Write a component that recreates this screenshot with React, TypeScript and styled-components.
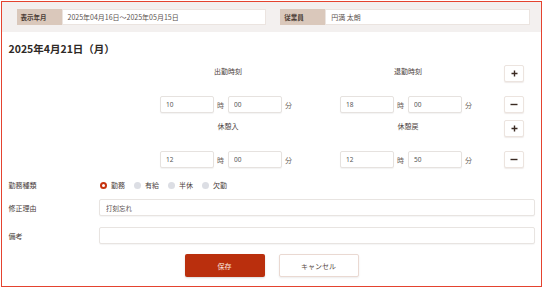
import React from 'react';
import styled, {createGlobalStyle} from "styled-components";

const GlobalStyle = createGlobalStyle`
  html, body {
    margin: 0;
    padding: 0;
    background: #ffffff;
  }
  body {
    font-family: "Noto Sans CJK JP", "Noto Sans", sans-serif;
    color: #3a3330;
  }
`

const timeBlocks = [
    {left: '出勤時刻', right: '退勤時刻', values: ['10', '00', '18', '00']},
    {left: '休憩入', right: '休憩戻', values: ['12', '00', '12', '50']},
];

const workTypes = ['勤務', '有給', '半休', '欠勤'];

const PlusIcon = () => (
    <svg width="7" height="7" viewBox="0 0 7 7">
        <path d="M3.5 0.5v6M0.5 3.5h6" stroke="#3a2a22" strokeWidth="1.4"/>
    </svg>
);

const MinusIcon = () => (
    <svg width="8" height="7" viewBox="0 0 8 7">
        <path d="M0.5 3.5h7" stroke="#3a2a22" strokeWidth="1.4"/>
    </svg>
);

const TimeGroup = ({hour, minute}: { hour: string, minute: string }) => (
    <TimeRow>
        <TimeInput defaultValue={hour}/>
        <Unit>時</Unit>
        <TimeInput defaultValue={minute}/>
        <Unit>分</Unit>
    </TimeRow>
);

export default function App() {
    return (
        <>
            <GlobalStyle/>
            <Card>
                <Header>
                    <HeaderField>
                        <HeaderLabel>表示年月</HeaderLabel>
                        <HeaderValue>2025年04月16日～2025年05月15日</HeaderValue>
                    </HeaderField>
                    <HeaderField>
                        <HeaderLabel>従業員</HeaderLabel>
                        <HeaderValue>円満 太朗</HeaderValue>
                    </HeaderField>
                </Header>
                <Body>
                    <Title>2025年4月21日（月）</Title>
                    <TimeSection>
                        {timeBlocks.map((b) => (
                            <TimeBlock key={b.left}>
                                <span/>
                                <ColLabel>{b.left}</ColLabel>
                                <span/>
                                <ColLabel>{b.right}</ColLabel>
                                <span/>
                                <IconButton><PlusIcon/></IconButton>

                                <span/>
                                <TimeGroup hour={b.values[0]} minute={b.values[1]}/>
                                <span/>
                                <TimeGroup hour={b.values[2]} minute={b.values[3]}/>
                                <span/>
                                <IconButton><MinusIcon/></IconButton>
                            </TimeBlock>
                        ))}
                    </TimeSection>
                    <FormRow $top={11}>
                        <FieldLabel>勤務種類</FieldLabel>
                        <RadioGroup>
                            {workTypes.map((t, i) => (
                                <RadioItem key={t}>
                                    <RadioDot $checked={i === 0}/>
                                    {t}
                                </RadioItem>
                            ))}
                        </RadioGroup>
                    </FormRow>
                    <FormRow $top={8}>
                        <FieldLabel>修正理由</FieldLabel>
                        <TextField defaultValue="打刻忘れ"/>
                    </FormRow>
                    <FormRow $top={11}>
                        <FieldLabel>備考</FieldLabel>
                        <TextField defaultValue=""/>
                    </FormRow>
                    <Actions>
                        <PrimaryButton>保存</PrimaryButton>
                        <SecondaryButton>キャンセル</SecondaryButton>
                    </Actions>
                </Body>
            </Card>
        </>
    );
}

const Card = styled.div`
  margin: 1px 0 0 1px;
  width: 541px;
  height: 286px;
  box-sizing: border-box;
  border: 1.5px solid #e4432f;
  background: #ffffff;
  display: flex;
  flex-direction: column;
`

const Header = styled.div`
  background: #f3f0ef;
  height: 30px;
  display: flex;
  align-items: center;
  gap: 14px;
  padding: 0 11px 0 14.5px;
  box-sizing: border-box;
`

const HeaderField = styled.div`
  flex: 1;
  display: flex;
  height: 16px;
`

const HeaderLabel = styled.div`
  width: 45px;
  flex-shrink: 0;
  background: #dac8bb;
  font-size: 6.5px;
  font-weight: 700;
  color: #4a3c35;
  display: flex;
  align-items: center;
  padding-left: 4px;
  box-sizing: border-box;
`

const HeaderValue = styled.div`
  flex: 1;
  background: #ffffff;
  border: 1px solid #ebe4e0;
  font-size: 7px;
  color: #5a5250;
  display: flex;
  align-items: center;
  padding-left: 5px;
`

const Body = styled.div`
  padding: 0 0 0 6.5px;
  display: flex;
  flex-direction: column;
`

const Title = styled.div`
  font-size: 10.5px;
  font-weight: 700;
  color: #2e2926;
  margin-top: 10px;
  line-height: 14px;
`

const TimeSection = styled.div`
  margin-top: 9px;
  display: flex;
  flex-direction: column;
  gap: 7px;
`

const TimeBlock = styled.div`
  display: grid;
  grid-template-columns: 151.5px 136px 44px 136px 28px 20px;
  grid-template-rows: 18px 17px;
  row-gap: 13px;
  align-items: start;
`

const ColLabel = styled.div`
  font-size: 7px;
  color: #4a403b;
  text-align: center;
  line-height: 10px;
  padding-top: 1px;
`

const IconButton = styled.button`
  width: 20px;
  height: 17px;
  padding: 0;
  border: 1px solid #ece4df;
  border-radius: 2px;
  background: #ffffff;
  box-shadow: 0 1px 1px rgba(120, 90, 70, 0.12);
  display: flex;
  align-items: center;
  justify-content: center;
`

const TimeRow = styled.div`
  display: flex;
  align-items: center;
`

const TimeInput = styled.input`
  width: 54px;
  height: 17px;
  box-sizing: border-box;
  border: 1px solid #e6e2df;
  border-radius: 2px;
  box-shadow: 0 1px 1px rgba(0, 0, 0, 0.05);
  font-family: "Noto Sans", sans-serif;
  font-size: 6.5px;
  color: #555;
  padding: 0 0 0 5px;
  outline: none;
`

const Unit = styled.span`
  width: 17px;
  font-size: 7px;
  color: #6a5e58;
  padding-left: 3px;
  box-sizing: border-box;
`

const FormRow = styled.div<{ $top: number }>`
  display: grid;
  grid-template-columns: 90.5px 436px;
  align-items: center;
  margin-top: ${p => p.$top}px;
`

const FieldLabel = styled.div`
  font-size: 7px;
  color: #4a403b;
  line-height: 12px;
`

const RadioGroup = styled.div`
  display: flex;
  align-items: center;
  gap: 9px;
  padding-left: 1px;
`

const RadioItem = styled.label`
  display: flex;
  align-items: center;
  gap: 4px;
  font-size: 7px;
  color: #4a403b;
  line-height: 12px;
`

const RadioDot = styled.span<{ $checked: boolean }>`
  width: 7px;
  height: 7px;
  border-radius: 50%;
  box-sizing: border-box;
  background: ${p => p.$checked ? '#ffffff' : '#dcdee4'};
  border: ${p => p.$checked ? '2px solid #c6330f' : 'none'};
`

const TextField = styled.input`
  height: 17px;
  box-sizing: border-box;
  border: 1px solid #e8e4e1;
  border-radius: 2px;
  box-shadow: 0 1px 1px rgba(0, 0, 0, 0.04);
  font-family: "Noto Sans CJK JP", sans-serif;
  font-size: 6.5px;
  color: #5a5250;
  padding: 0 0 0 6px;
  outline: none;
`

const Actions = styled.div`
  display: flex;
  justify-content: center;
  gap: 14px;
  margin: 10px 0 0 -6.5px;
`

const PrimaryButton = styled.button`
  width: 80px;
  height: 23px;
  border: none;
  border-radius: 2px;
  background: #ba2f0d;
  color: #fbe6df;
  font-family: "Noto Sans CJK JP", sans-serif;
  font-size: 7px;
  box-shadow: 0 1px 2px rgba(0, 0, 0, 0.15);
`

const SecondaryButton = styled.button`
  width: 80px;
  height: 23px;
  border: 1px solid #ead9d2;
  border-radius: 2px;
  background: #ffffff;
  color: #5a4d47;
  font-family: "Noto Sans CJK JP", sans-serif;
  font-size: 7px;
  box-shadow: 0 1px 2px rgba(0, 0, 0, 0.08);
`
